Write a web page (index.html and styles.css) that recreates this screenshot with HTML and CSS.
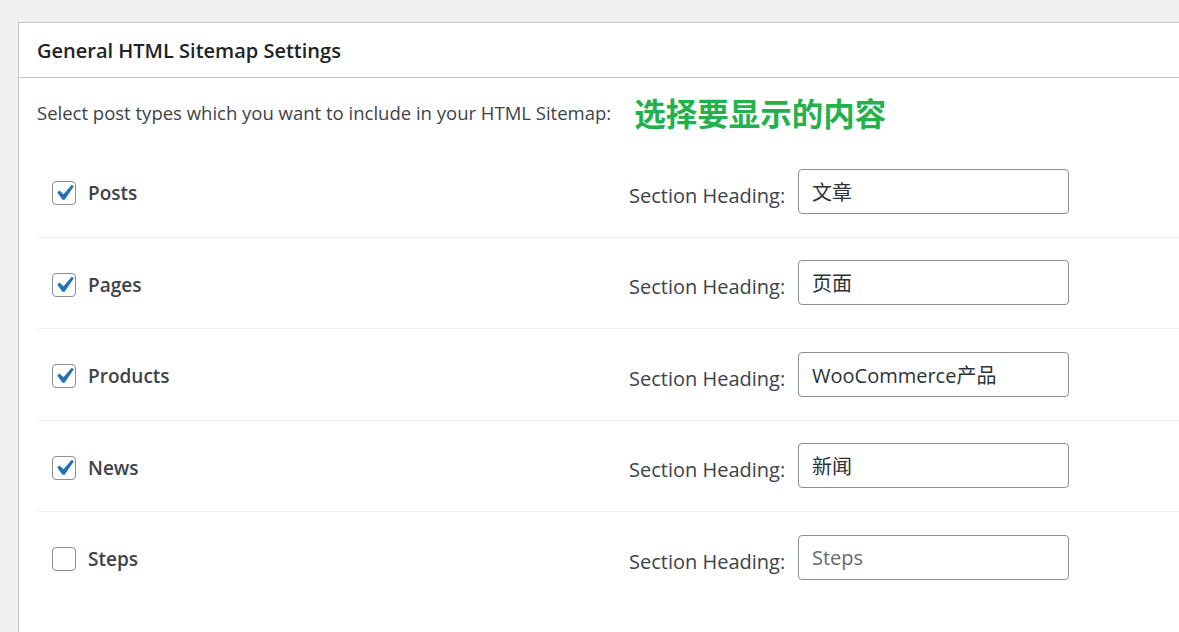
FILE: index.html
```html
<!DOCTYPE html>
<html lang="en">
<head>
  <meta charset="UTF-8">
  <meta name="viewport" content="width=device-width, initial-scale=1.0">
  <title>General HTML Sitemap Settings</title>
  <link rel="stylesheet" href="styles.css">
</head>
<body>
  <div class="panel">
    <div class="panel-header">
      <h2>General HTML Sitemap Settings</h2>
    </div>
    <div class="panel-body">
      <p class="intro">
        <span>Select post types which you want to include in your HTML Sitemap:</span>
        <span class="note">选择要显示的内容</span>
      </p>
      <div class="type-row">
        <label class="type-name"><input type="checkbox" checked> Posts</label>
        <span class="heading-label">Section Heading:</span>
        <input class="heading-input" type="text" value="文章">
      </div>
      <div class="type-row">
        <label class="type-name"><input type="checkbox" checked> Pages</label>
        <span class="heading-label">Section Heading:</span>
        <input class="heading-input" type="text" value="页面">
      </div>
      <div class="type-row">
        <label class="type-name"><input type="checkbox" checked> Products</label>
        <span class="heading-label">Section Heading:</span>
        <input class="heading-input" type="text" value="WooCommerce产品">
      </div>
      <div class="type-row">
        <label class="type-name"><input type="checkbox" checked> News</label>
        <span class="heading-label">Section Heading:</span>
        <input class="heading-input" type="text" value="新闻">
      </div>
      <div class="type-row">
        <label class="type-name"><input type="checkbox"> Steps</label>
        <span class="heading-label">Section Heading:</span>
        <input class="heading-input" type="text" placeholder="Steps">
      </div>
    </div>
  </div>
</body>
</html>
```

FILE: styles.css
```css
body {
  margin: 0;
  padding: 22px 0 0 18px;
  background: #f0f0f1;
  font-family: "Open Sans", "Noto Sans CJK SC", sans-serif;
  color: #3c434a;
  overflow: hidden;
}

.panel {
  width: calc(100% + 20px);
  background: #fff;
  border: 1px solid #c3c4c7;
  min-height: 700px;
}

.panel-header {
  height: 54px;
  display: flex;
  align-items: center;
  padding: 0 18px;
  border-bottom: 1px solid #c3c4c7;
}

.panel-header h2 {
  margin: 0;
  font-size: 20px;
  font-weight: 600;
  color: #1d2327;
}

.panel-body {
  padding: 0 0 0 18px;
}

.intro {
  margin: 0;
  height: 68px;
  display: flex;
  align-items: center;
  font-size: 18.5px;
}

.intro .note {
  margin-left: 23px;
  font-family: "Noto Sans CJK SC", sans-serif;
  font-size: 31.5px;
  font-weight: 700;
  color: #22b14c;
}

.type-row {
  display: flex;
  align-items: center;
  height: 45px;
  padding: 22.75px 0;
  border-bottom: 1px solid #f0f0f1;
}

.type-row:last-child {
  border-bottom: none;
}

.type-name {
  display: flex;
  align-items: center;
  width: 577px;
  padding-left: 15px;
  margin-top: 4px;
  font-size: 19px;
  font-weight: 600;
  color: #3c434a;
}

.type-name input {
  appearance: none;
  width: 24px;
  height: 24px;
  margin: 0 12px 0 0;
  border: 1px solid #8c8f94;
  border-radius: 4px;
  background: #fff;
}

.type-name input:checked {
  background: #fff url("data:image/svg+xml;utf8,<svg xmlns='http://www.w3.org/2000/svg' viewBox='0 0 20 20'><path d='M14.83 4.89l1.34.94-5.81 8.38H9.02L5.78 9.67l1.34-1.25 2.57 2.4z' fill='%232271b1'/></svg>") center / 32px no-repeat;
}

.heading-label {
  width: 156px;
  margin-top: 8px;
  font-size: 20px;
  white-space: nowrap;
}

.heading-input {
  width: 271px;
  height: 45px;
  box-sizing: border-box;
  margin-left: 13px;
  padding: 0 13px;
  border: 1px solid #8c8f94;
  border-radius: 4px;
  font-family: "Open Sans", "Noto Sans CJK SC", sans-serif;
  font-size: 20px;
  color: #2c3338;
}

.heading-input::placeholder {
  color: #646970;
}
```
